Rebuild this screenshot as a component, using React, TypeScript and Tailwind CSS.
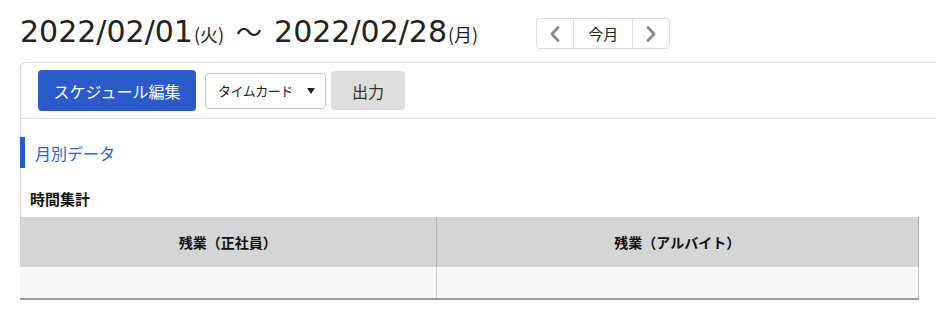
const jp = "font-['Noto_Sans_CJK_JP',sans-serif]";

function Chevron({ dir }: { dir: "left" | "right" }) {
  return (
    <svg width="10" height="16" viewBox="0 0 10 16" fill="none">
      <polyline
        points={dir === "left" ? "8,1.5 2,8 8,14.5" : "2,1.5 8,8 2,14.5"}
        stroke="#8a8a8a"
        strokeWidth="2.8"
        strokeLinecap="round"
        strokeLinejoin="round"
      />
    </svg>
  );
}

export default function App() {
  return (
    <div className={`h-[315px] w-[936px] overflow-hidden bg-white text-[#222] ${jp}`}>
      <div className="flex items-start pl-5 h-[62px]">
        <h1 className="mt-[17px] flex items-baseline whitespace-nowrap leading-none">
          <span className="font-['DejaVu_Sans',sans-serif] text-[30px]">2022/02/01</span>
          <span className="text-[18px] ml-[1px]">(火)</span>
          <span className="text-[26px] mx-[12px]">〜</span>
          <span className="font-['DejaVu_Sans',sans-serif] text-[30px]">2022/02/28</span>
          <span className="text-[18px] ml-[1px]">(月)</span>
        </h1>
        <div className="mt-[18px] ml-[58px] flex h-[31px] rounded-[4px] border border-[#dcdcdc]">
          <button className="flex w-[36px] items-center justify-center">
            <Chevron dir="left" />
          </button>
          <button className="w-[60px] border-x border-[#dcdcdc] text-[15px] leading-none">今月</button>
          <button className="flex w-[36px] items-center justify-center">
            <Chevron dir="right" />
          </button>
        </div>
      </div>

      <div className="ml-5 w-[940px] rounded-tl-[6px] border-l border-t border-[#dcdcdc]">
        <div className="flex items-center gap-[9px] h-[56px] border-b border-[#dcdcdc] pl-[17px]">
          <button className="h-[41px] w-[158px] rounded-[4px] bg-[#2a5bc8] text-[16px] text-white">
            スケジュール編集
          </button>
          <div className="flex h-[36px] w-[121px] items-center justify-between rounded-[4px] border border-[#c6c6c6] pl-[12px] pr-[10px]">
            <span className="text-[13px] tracking-[-0.5px]">タイムカード</span>
            <span className="h-0 w-0 border-x-[4.5px] border-t-[6px] border-x-transparent border-t-[#222]"></span>
          </div>
          <button className="-ml-[4px] h-[39px] w-[74px] rounded-[4px] bg-[#dddddd] text-[16px] text-[#333]">
            出力
          </button>
        </div>

        <div className="pt-[18px]">
          <div className="flex h-[31px] items-center border-l-[5px] border-[#2a5bc8] -ml-[1px] pl-[10px]">
            <span className="text-[16px] text-[#2f62cc]">月別データ</span>
          </div>
          <div className="mt-[21px] pl-[9px] text-[15px] font-bold leading-[20px] text-[#111]">時間集計</div>
          <table className="mt-[8px] w-[899px] border-collapse -ml-[1px]">
            <thead>
              <tr className="h-[50px] bg-[#d4d5d5]">
                <th className="w-[416px] border-r border-[#b0b0b0] text-[14px] font-bold text-[#111]">残業（正社員）</th>
                <th className="border-r border-[#a8a8a8] text-[14px] font-bold text-[#111]">残業（アルバイト）</th>
              </tr>
            </thead>
            <tbody>
              <tr className="h-[32px] bg-[#f8f8f8] border-b-2 border-[#9a9a9a]">
                <td className="border-r border-[#cccccc]"></td>
                <td className="border-r border-[#cccccc]"></td>
              </tr>
            </tbody>
          </table>
        </div>
      </div>
    </div>
  );
}
